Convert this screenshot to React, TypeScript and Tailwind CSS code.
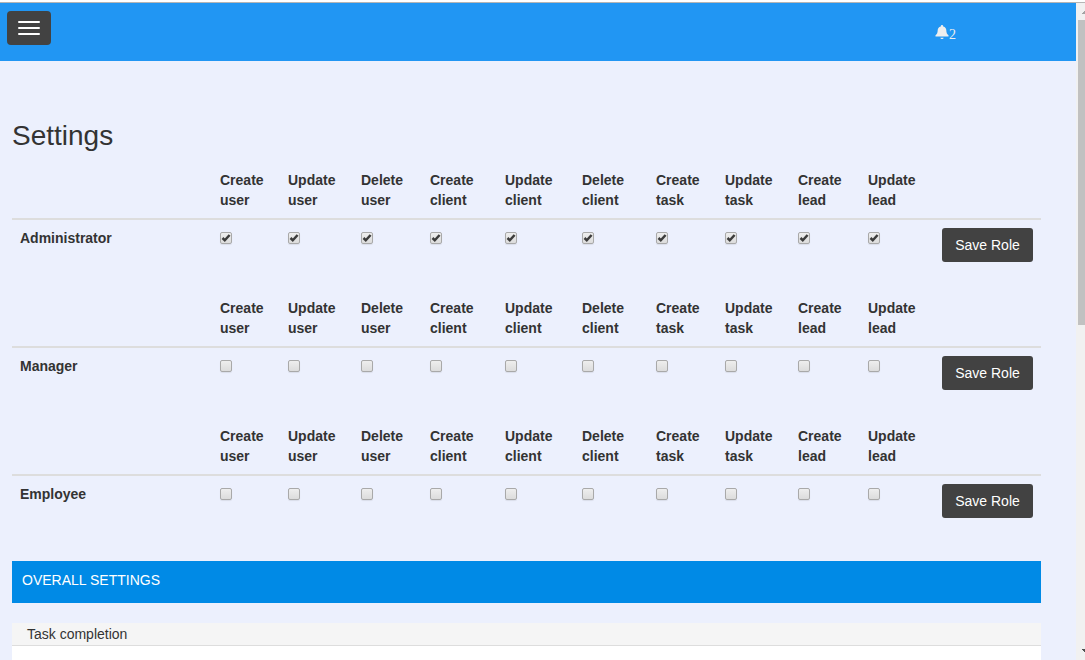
const permissions = [
  ['Create', 'user'],
  ['Update', 'user'],
  ['Delete', 'user'],
  ['Create', 'client'],
  ['Update', 'client'],
  ['Delete', 'client'],
  ['Create', 'task'],
  ['Update', 'task'],
  ['Create', 'lead'],
  ['Update', 'lead'],
];

const roles = [
  { name: 'Administrator', granted: true },
  { name: 'Manager', granted: false },
  { name: 'Employee', granted: false },
];

const columns =
  'grid grid-cols-[200px_68px_73px_69px_75px_77px_74px_69px_73px_70px_74px_107px]';

function PermissionBox({ checked, label }: { checked: boolean; label: string }) {
  return (
    <span
      role="checkbox"
      aria-checked={checked}
      aria-label={label}
      className="mt-1 block h-3 w-3 rounded-[2px] border border-[#a9a9a9] bg-linear-to-b from-[#eeeeee] to-[#dcdcdc] shadow-[0_1px_1px_rgba(0,0,0,0.08)]"
    >
      {checked && (
        <svg viewBox="0 0 10 10" className="block h-[10px] w-[10px]" fill="none">
          <path d="M1.5 5 L3.8 7.3 L8.6 2" stroke="#3c3c3c" strokeWidth="2.5" />
        </svg>
      )}
    </span>
  );
}

function RoleTable({ name, granted }: { name: string; granted: boolean }) {
  return (
    <div className="mb-5 w-[1029px]">
      <div className={`${columns} h-[58px] border-b-2 border-[#dddddd] font-bold`}>
        <div />
        {permissions.map(([action, subject]) => (
          <div key={action + subject} className="p-2">
            {action}
            <br />
            {subject}
          </div>
        ))}
      </div>
      <div className={`${columns} h-[50px]`}>
        <div className="p-2 font-bold">{name}</div>
        {permissions.map(([action, subject]) => (
          <div key={action + subject} className="p-2">
            <PermissionBox checked={granted} label={`${action} ${subject}`} />
          </div>
        ))}
        <div className="p-2">
          <button className="h-[34px] w-[91px] rounded-[3px] bg-[#424242] text-white">
            Save Role
          </button>
        </div>
      </div>
    </div>
  );
}

function Scrollbar() {
  return (
    <div className="flex w-[9px] shrink-0 flex-col items-end bg-[#f1f1f1]">
      <div className="flex h-[17px] w-full justify-end">
        <svg viewBox="0 0 4 4" className="mt-[7px] h-1 w-1" shapeRendering="crispEdges">
          <path d="M0 4 L4 0 V4 Z" fill="#a3a3a3" />
        </svg>
      </div>
      <div className="h-[305px] w-[7px] bg-[#c1c1c1]" />
      <div className="flex-1" />
      <svg viewBox="0 0 4 4" className="mb-[7px] h-1 w-1" shapeRendering="crispEdges">
        <path d="M0 0 H4 V4 Z" fill="#505050" />
      </svg>
    </div>
  );
}

export default function App() {
  return (
    <div className="flex h-[660px] w-[1085px] flex-col overflow-hidden bg-white font-['Liberation_Sans',Arial,sans-serif] text-sm leading-5 text-[#333333]">
      <div className="h-[3px] shrink-0 border-b border-[#b5b5b5]" />
      <div className="flex min-h-0 flex-1">
        <div className="flex w-[1076px] flex-col bg-[#ecf0fd]">
          <header className="flex h-[58px] shrink-0 items-start justify-between bg-[#2196f3] pt-2 pr-[120px] pl-[7px]">
            <button
              aria-label="Menu"
              className="flex h-[34px] w-11 flex-col items-center justify-center gap-1 rounded-[4px] bg-[#424242]"
            >
              <span className="h-[2px] w-[22px] rounded-[1px] bg-white" />
              <span className="h-[2px] w-[22px] rounded-[1px] bg-white" />
              <span className="h-[2px] w-[22px] rounded-[1px] bg-white" />
            </button>
            <div className="flex pt-[14px] text-[#eeeeee]">
              <svg viewBox="0 0 14 15" className="h-[15px] w-[14px]" fill="currentColor">
                <path d="M7 0 C7.8 0 8.2 .6 8.2 1.4 C10.4 1.9 11.2 3.5 11.3 5.2 C11.4 7.5 11.8 8.9 13.5 10.3 V11.5 H.5 V10.3 C2.2 8.9 2.6 7.5 2.7 5.2 C2.8 3.5 3.6 1.9 5.8 1.4 C5.8 .6 6.2 0 7 0 Z M5.4 12.7 H8.6 C8.4 13.7 7.9 14 7 14 C6.1 14 5.6 13.7 5.4 12.7 Z" />
              </svg>
              <span className="font-['Liberation_Serif',serif] text-sm leading-5">2</span>
            </div>
          </header>
          <main className="flex min-h-0 flex-1 flex-col pl-3">
            <h1 className="mt-[58px] mb-[10px] h-[33px] text-[28px] leading-[33px]">Settings</h1>
            {roles.map((role) => (
              <RoleTable key={role.name} name={role.name} granted={role.granted} />
            ))}
            <h2 className="mt-[15px] h-[42px] w-[1029px] shrink-0 bg-[#008ae6] px-[10px] pt-[9px] text-white">
              OVERALL SETTINGS
            </h2>
            <section className="mt-5 flex w-[1029px] flex-1 flex-col bg-white">
              <h3 className="h-[23px] border-b border-[#dddddd] bg-[#f5f5f5] px-[15px] pt-px">
                Task completion
              </h3>
            </section>
          </main>
        </div>
        <Scrollbar />
      </div>
    </div>
  );
}
